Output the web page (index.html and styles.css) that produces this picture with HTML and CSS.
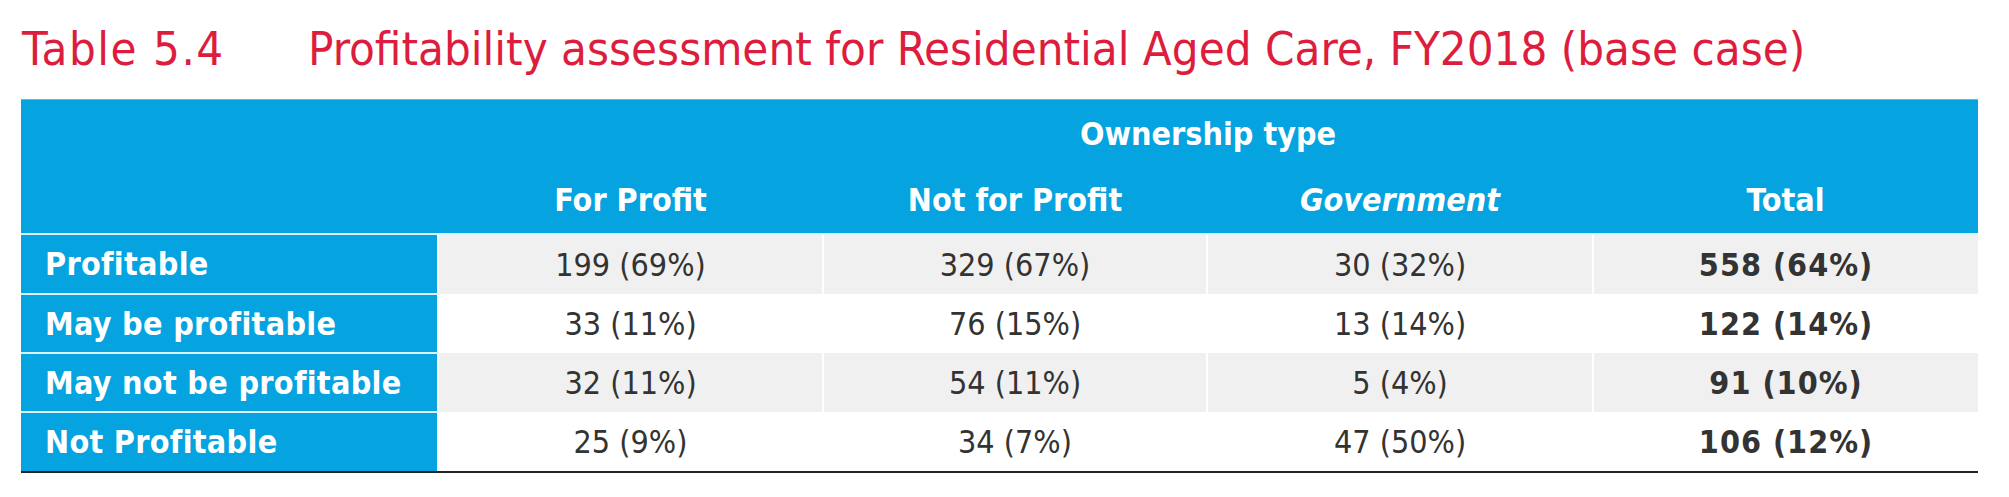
FILE: index.html
```html
<!DOCTYPE html>
<html lang="en">
<head>
<meta charset="utf-8">
<title>Table 5.4</title>
<link rel="stylesheet" href="styles.css">
</head>
<body>
<div class="page">
  <h1 class="title"><span class="num">Table 5.4</span><span class="cap">Profitability assessment for Residential Aged Care, FY2018 (base case)</span></h1>
  <table class="tbl">
    <colgroup>
      <col class="c-label"><col class="c-data"><col class="c-data2"><col class="c-data3"><col class="c-data">
    </colgroup>
    <thead>
      <tr class="h1">
        <th></th>
        <th colspan="4">Ownership type</th>
      </tr>
      <tr class="h2">
        <th></th>
        <th>For Profit</th>
        <th>Not for Profit</th>
        <th><em>Government</em></th>
        <th>Total</th>
      </tr>
    </thead>
    <tbody>
      <tr class="shade">
        <th>Profitable</th><td>199 (69%)</td><td>329 (67%)</td><td>30 (32%)</td><td class="tot">558 (64%)</td>
      </tr>
      <tr>
        <th>May be profitable</th><td>33 (11%)</td><td>76 (15%)</td><td>13 (14%)</td><td class="tot">122 (14%)</td>
      </tr>
      <tr class="shade">
        <th>May not be profitable</th><td>32 (11%)</td><td>54 (11%)</td><td>5 (4%)</td><td class="tot">91 (10%)</td>
      </tr>
      <tr class="last">
        <th>Not Profitable</th><td>25 (9%)</td><td>34 (7%)</td><td>47 (50%)</td><td class="tot">106 (12%)</td>
      </tr>
    </tbody>
  </table>
</div>
</body>
</html>
```

FILE: styles.css
```css
html, body {
  margin: 0;
  padding: 0;
  background: #ffffff;
}

body {
  font-family: "DejaVu Sans Condensed", "DejaVu Sans", sans-serif;
  font-stretch: semi-condensed;
}

.page {
  padding: 21px 0 0 21px;
}

.title {
  display: flex;
  margin: 0 0 23px 1px;
  font-weight: normal;
  font-size: 47px;
  line-height: 55px;
  color: #dd1d3e;
  white-space: nowrap;
}

.title .num {
  width: 286px;
  flex: none;
  letter-spacing: 1.5px;
}

.tbl {
  width: 1957px;
  border-collapse: collapse;
  table-layout: fixed;
  font-size: 32px;
  color: #333333;
}

.c-label { width: 417px; }
.c-data { width: 385px; }
.c-data2 { width: 384px; }
.c-data3 { width: 386px; }

.tbl thead th {
  background: #05a3df;
  color: #ffffff;
  font-weight: bold;
  text-align: center;
  padding: 0;
}

.tbl thead .h1 th {
  height: 67px;
  vertical-align: middle;
  border-top: 1px solid #52c3ec;
}

.tbl thead .h2 th {
  height: 66px;
  vertical-align: middle;
  border-bottom: 2px solid #dcf2fb;
}

.tbl thead em {
  font-style: italic;
}

.tbl tbody th {
  background: #05a3df;
  color: #ffffff;
  font-weight: bold;
  text-align: left;
  padding: 0 0 0 24px;
  height: 57px;
  border-bottom: 2px solid #dcf2fb;
  white-space: nowrap;
  letter-spacing: 0.3px;
}

.tbl tbody td {
  text-align: center;
  padding: 0;
  height: 59px;
  border-left: 2px solid #ffffff;
  background: #ffffff;
}

.tbl tbody tr.shade td {
  background: #f0f0f0;
}

.tbl tbody td.tot {
  font-weight: bold;
  letter-spacing: 1px;
}

.tbl tbody tr.last th {
  border-bottom: 2px solid #222222;
}

.tbl tbody tr.last td {
  border-bottom: 2px solid #222222;
}
```
